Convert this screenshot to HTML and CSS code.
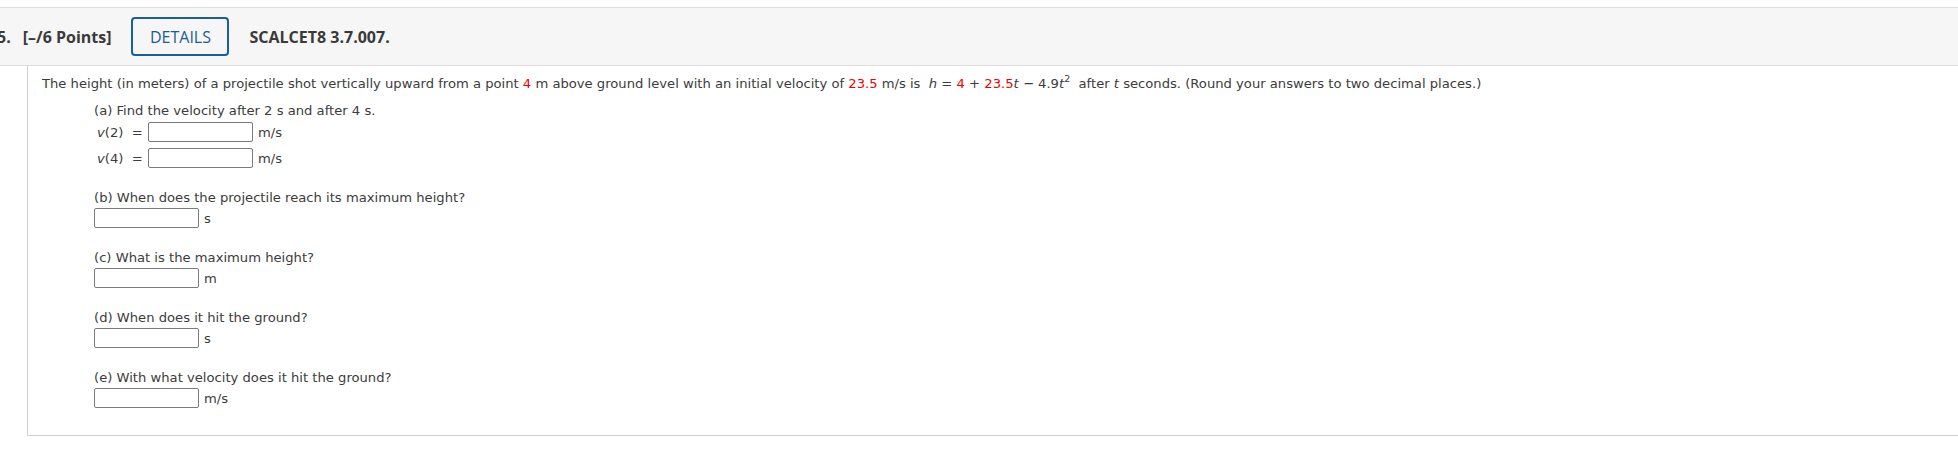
FILE: index.html
```html
<!DOCTYPE html>
<html>
<head>
<meta charset="utf-8">
<link rel="stylesheet" href="styles.css">
</head>
<body>
<header class="qhead">
  <span class="qnum">5.</span>
  <span class="qpts">[–/6 Points]</span>
  <button class="details">DETAILS</button>
  <span class="qref">SCALCET8 3.7.007.</span>
</header>
<section class="qbody">
  <p class="stem">The height (in meters) of a projectile shot vertically upward from a point <span class="red">4</span> m above ground level with an initial velocity of <span class="red">23.5</span> m/s is &nbsp;<i>h</i> = <span class="red">4</span> + <span class="red">23.5</span><i>t</i> − 4.9<i>t</i><sup>2</sup>&nbsp; after <i>t</i> seconds. (Round your answers to two decimal places.)</p>
  <div class="part part-a">
    <div class="plabel">(a) Find the velocity after 2 s and after 4 s.</div>
    <div class="rows">
      <div class="row"><span class="vlabel"><i>v</i>(2) &nbsp;=</span><span class="ans"></span><span class="unit">m/s</span></div>
      <div class="row"><span class="vlabel"><i>v</i>(4) &nbsp;=</span><span class="ans"></span><span class="unit">m/s</span></div>
    </div>
  </div>
  <div class="part">
    <div class="plabel">(b) When does the projectile reach its maximum height?</div>
    <div class="row"><span class="ans"></span><span class="unit">s</span></div>
  </div>
  <div class="part">
    <div class="plabel">(c) What is the maximum height?</div>
    <div class="row"><span class="ans"></span><span class="unit">m</span></div>
  </div>
  <div class="part">
    <div class="plabel">(d) When does it hit the ground?</div>
    <div class="row"><span class="ans"></span><span class="unit">s</span></div>
  </div>
  <div class="part last">
    <div class="plabel">(e) With what velocity does it hit the ground?</div>
    <div class="row"><span class="ans"></span><span class="unit">m/s</span></div>
  </div>
</section>
</body>
</html>
```
FILE: styles.css
```css
html, body {
  margin: 0;
  padding: 0;
  background: #fff;
  overflow: hidden;
}
body {
  font-family: "DejaVu Sans", Verdana, sans-serif;
  font-size: 13.15px;
  color: #3c3c3c;
}
.qhead {
  margin-top: 7px;
  height: 57px;
  border-top: 1px solid #dedede;
  border-bottom: 1px solid #dcdcdc;
  background: #f6f6f6;
  display: flex;
  align-items: center;
  font-family: "Open Sans", sans-serif;
  font-size: 16px;
  font-weight: 700;
  color: #3a3a3a;
  white-space: nowrap;
}
.qnum {
  margin-left: -3px;
}
.qpts {
  margin-left: 12px;
}
.details {
  margin-left: 20px;
  width: 98px;
  height: 39px;
  padding: 0;
  border: 2px solid #17609a;
  border-radius: 4px;
  background: transparent;
  color: #1b5d92;
  font-family: "Open Sans", sans-serif;
  font-size: 16px;
  font-weight: 400;
}
.qref {
  margin-left: 20px;
}
.qbody {
  margin-left: 27px;
  margin-right: -4px;
  border-left: 1px solid #cfcfcf;
  border-bottom: 1px solid #cfcfcf;
  padding: 8px 0 27px 14px;
}
.stem {
  margin: 0;
  line-height: 20px;
  white-space: nowrap;
}
.stem sup {
  font-size: 9.5px;
  line-height: 0;
  vertical-align: 6px;
}
.red {
  color: #f00000;
}
.part {
  margin-left: 52px;
  margin-top: 21px;
}
.part-a {
  margin-top: 8px;
}
.plabel {
  line-height: 18px;
  height: 18px;
  white-space: nowrap;
}
.rows {
  display: flex;
  flex-direction: column;
  gap: 6px;
  margin-top: 2px;
}
.part .plabel + .row {
  margin-top: 1px;
}
.row {
  display: flex;
  align-items: center;
  height: 20px;
}
.vlabel {
  width: 54px;
  padding-left: 3px;
  box-sizing: border-box;
  white-space: nowrap;
}
.ans {
  width: 105px;
  height: 20px;
  box-sizing: border-box;
  border: 1px solid #7a7a7a;
  border-radius: 2px;
  background: #fff;
}
.unit {
  margin-left: 5px;
}
```
